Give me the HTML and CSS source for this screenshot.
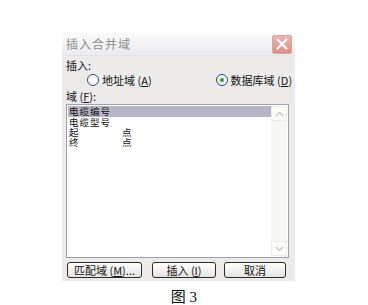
FILE: index.html
```html
<!DOCTYPE html>
<html>
<head>
<meta charset="utf-8">
<link rel="stylesheet" href="styles.css">
</head>
<body>
<div class="page">
  <div class="dialog">
    <div class="titlebar">
      <span class="title">插入合并域</span>
      <span class="close"><svg width="14" height="12" viewBox="0 0 14 12"><path d="M2 1 L12 11 M12 1 L2 11" stroke="#fff" stroke-width="2.2" fill="none"/></svg></span>
    </div>
    <div class="body">
      <div class="label">插入:</div>
      <div class="radios">
        <span class="radio"><span class="circle"></span><span class="rtext">地址域 (<u>A</u>)</span></span>
        <span class="radio second"><span class="circle on"></span><span class="rtext">数据库域 (<u>D</u>)</span></span>
      </div>
      <div class="label field-label">域 (<u>F</u>):</div>
      <div class="listbox">
        <div class="items">
          <div class="item selected">电缆编号</div>
          <div class="item">电缆型号</div>
          <div class="item"><span class="c1">起</span>点</div>
          <div class="item"><span class="c1">终</span>点</div>
        </div>
        <div class="scrollbar">
          <div class="arrow"><svg width="9" height="6" viewBox="0 0 9 6"><path d="M1 5 L4.5 1.5 L8 5" stroke="#c8c8c0" stroke-width="1.4" fill="none"/></svg></div>
          <div class="track"></div>
          <div class="arrow"><svg width="9" height="6" viewBox="0 0 9 6"><path d="M1 1 L4.5 4.5 L8 1" stroke="#c8c8c0" stroke-width="1.4" fill="none"/></svg></div>
        </div>
      </div>
      <div class="buttons">
        <button class="btn b1">匹配域 (<u>M</u>)...</button>
        <button class="btn b2">插入 (<u>I</u>)</button>
        <button class="btn b3">取消</button>
      </div>
    </div>
  </div>
  <div class="caption">图 3</div>
</div>
</body>
</html>
```
FILE: styles.css
```css
html, body {
  margin: 0;
  padding: 0;
  background: #ffffff;
}
.page {
  width: 368px;
  height: 305px;
  padding-top: 33px;
  box-sizing: border-box;
  overflow: hidden;
}
.dialog {
  margin-left: 62px;
  width: 233px;
  height: 248px;
  background: #ecebe9;
  box-sizing: border-box;
  font-family: "Noto Sans CJK SC", "DejaVu Sans", sans-serif;
  font-size: 11px;
  color: #111;
}
.titlebar {
  height: 23px;
  display: flex;
  align-items: center;
  justify-content: space-between;
  padding: 0 3px 0 4px;
  background: linear-gradient(#fafafa, #ebebef);
  border-bottom: 1px solid #e4e4e6;
  box-sizing: border-box;
}
.title {
  color: #8e8e8e;
  font-size: 12px;
  letter-spacing: 1px;
  line-height: 14px;
}
.close {
  width: 20px;
  height: 19px;
  box-sizing: border-box;
  border: 1px solid #d7a6a6;
  border-radius: 2px;
  background: linear-gradient(#eab4b0, #dc8f8a);
  display: flex;
  align-items: center;
  justify-content: center;
}
.body {
  padding: 3px 5px 0 4px;
}
.label {
  line-height: 13px;
  height: 13px;
}
.radios {
  display: flex;
  height: 16px;
  align-items: center;
  padding-left: 21px;
}
.radio {
  display: flex;
  align-items: center;
  white-space: nowrap;
}
.rtext {
  line-height: 13px;
  white-space: nowrap;
}
.radio.second {
  margin-left: 64px;
}
.circle {
  width: 10px;
  height: 10px;
  border: 1px solid #2a4a7a;
  border-radius: 50%;
  background: #fbfbfb;
  margin-right: 3px;
  position: relative;
  flex: none;
}
.circle.on::after {
  content: "";
  position: absolute;
  left: 3px;
  top: 3px;
  width: 4px;
  height: 4px;
  border-radius: 50%;
  background: #2f9a3a;
}
.field-label {
  margin-top: 2px;
}
.listbox {
  margin-top: 1px;
  height: 154px;
  width: 223px;
  box-sizing: border-box;
  border: 1px solid #9aa2b4;
  background: #fff;
  display: flex;
  padding: 1px;
}
.items {
  flex: 1;
}
.item {
  height: 10px;
  line-height: 10px;
  font-size: 9.5px;
  letter-spacing: 1px;
  padding-left: 1px;
  white-space: nowrap;
}
.item.selected {
  background: #b6b6c6;
  height: 11px;
  line-height: 11px;
}
.c1 {
  display: inline-block;
  width: 53px;
}
.scrollbar {
  width: 16px;
  display: flex;
  flex-direction: column;
  background: #f7f7f3;
}
.arrow {
  height: 15px;
  display: flex;
  align-items: center;
  justify-content: center;
  border: 1px solid #ececec;
  box-sizing: border-box;
  background: #fbfbf8;
}
.track {
  flex: 1;
}
.buttons {
  display: flex;
  margin-top: 4px;
  padding-left: 1px;
}
.btn {
  height: 16px;
  padding: 0;
  border: 1px solid #2b2b2b;
  border-radius: 3px;
  background: linear-gradient(#ffffff, #e4e4e0);
  font-family: "Noto Sans CJK SC", "DejaVu Sans", sans-serif;
  font-size: 11px;
  line-height: 13px;
  color: #111;
  display: flex;
  align-items: center;
  justify-content: center;
  white-space: nowrap;
}
.b1 { width: 75px; }
.b2 { width: 64px; margin-left: 10px; }
.b3 { width: 62px; margin-left: 8px; }
.caption {
  text-align: center;
  font-family: "Liberation Serif", "Noto Sans CJK SC", serif;
  font-size: 15px;
  line-height: 16px;
  margin-top: 8px;
  color: #111;
}
```
